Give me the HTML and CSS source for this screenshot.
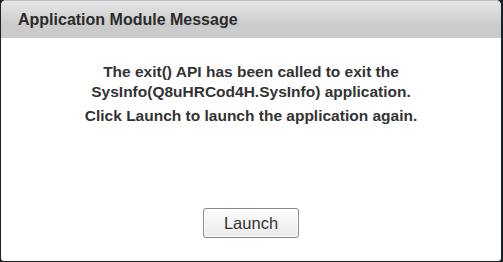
FILE: index.html
```html
<!DOCTYPE html>
<html lang="en">
<head>
    <meta charset="UTF-8">
    <title>Application Module Message</title>
    <link rel="stylesheet" href="styles.css">
</head>
<body class="main">
    <div class="dialog">
        <div class="dialog__header">Application Module Message</div>
        <div class="dialog__body">
            <p class="message">The exit() API has been called to exit the<br>SysInfo(Q8uHRCod4H.SysInfo) application.</p>
            <p class="message message--hint">Click Launch to launch the application again.</p>
            <div class="actions">
                <button class="button">Launch</button>
            </div>
        </div>
    </div>
</body>
</html>
```

FILE: styles.css
```css
html, body {
    margin: 0;
    height: 100%;
}

.main {
    background: #1b2129;
    padding: 0 2px 1px 1px;
    box-sizing: border-box;
    font-family: "Liberation Sans", Arial, sans-serif;
}

.dialog {
    height: 100%;
    background: #fff;
    border-radius: 5px 5px 3px 3px;
    display: flex;
    flex-direction: column;
    overflow: hidden;
}

.dialog__header {
    height: 38px;
    box-sizing: border-box;
    padding: 0 17px;
    border-top: 1px solid #bdbdbd;
    border-radius: 5px 5px 0 0;
    background: linear-gradient(#e6e6e6, #cbcbcb 65%, #cbcbcb);
    color: #2b2b2b;
    font-size: 16px;
    font-weight: bold;
    line-height: 37px;
}

.dialog__body {
    flex: 1;
    display: flex;
    flex-direction: column;
    align-items: center;
    padding-top: 24px;
}

.message {
    margin: 0;
    text-align: center;
    color: #333;
    font-size: 15.5px;
    font-weight: bold;
    line-height: 20px;
}

.message--hint {
    margin-top: 4px;
}

.actions {
    margin-top: auto;
    margin-bottom: 23px;
}

.button {
    width: 96px;
    height: 30px;
    border: 1px solid #8a8a8a;
    border-radius: 3px;
    background: linear-gradient(#fdfdfd, #ebebeb);
    box-shadow: inset 0 0 0 1px #fff;
    color: #333;
    font-family: "Liberation Sans", Arial, sans-serif;
    font-size: 16.5px;
}
```
